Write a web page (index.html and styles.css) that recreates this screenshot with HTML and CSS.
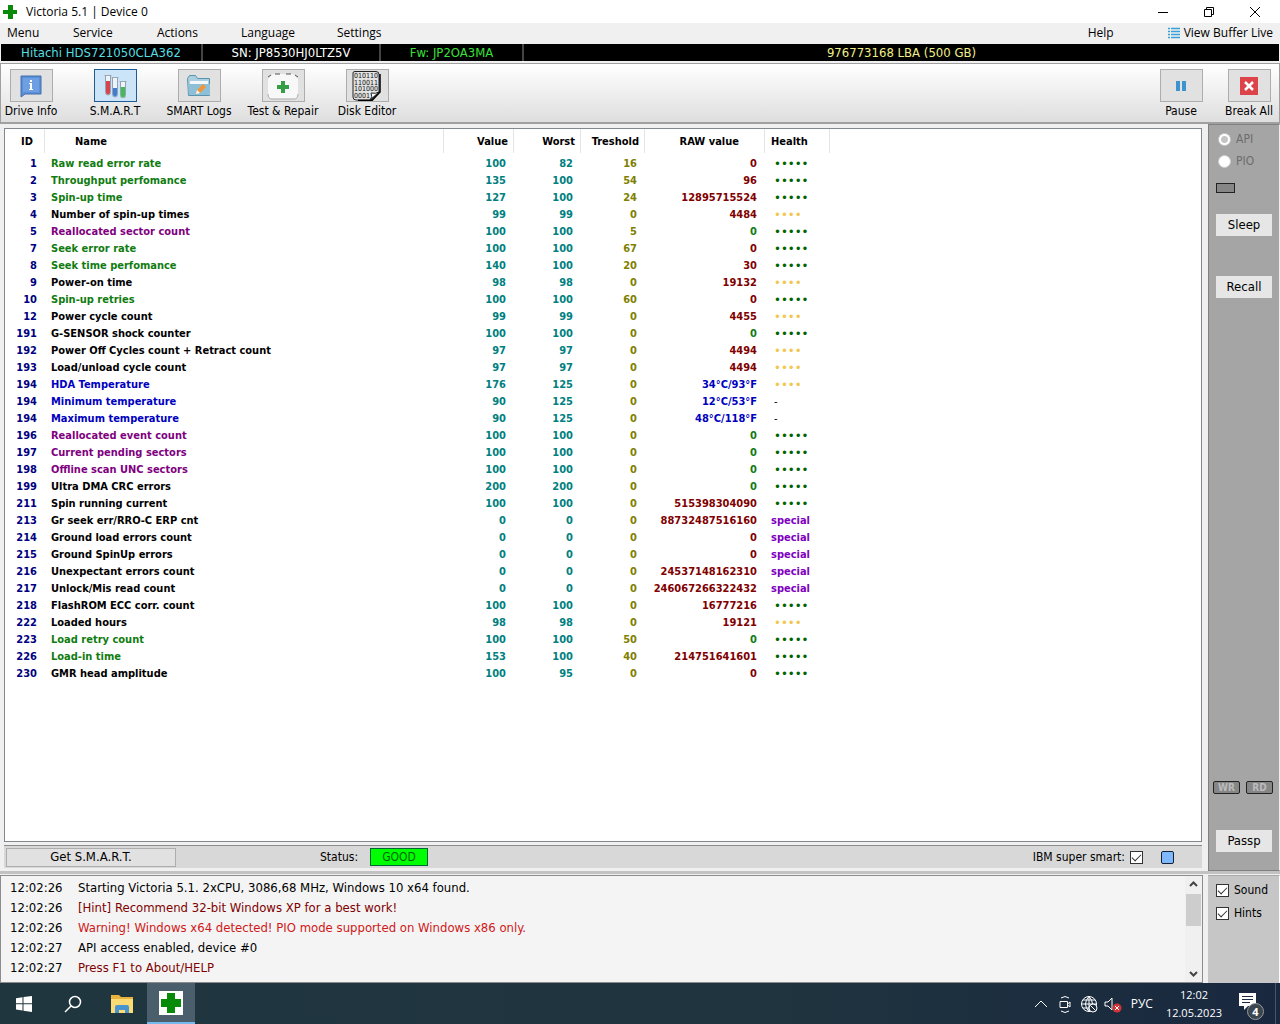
FILE: index.html
```
<!DOCTYPE html>
<html lang="en">
<head>
    <meta charset="UTF-8">
    <meta name="viewport" content="width=device-width, initial-scale=1.0">
    <title>Victoria 5.1 | Device 0</title>
    <link rel="stylesheet" href="styles.css">
</head>
<body>
    <header class="titlebar">
        <svg class="logo" viewBox="0 0 14 14"><path d="M5 0h5v5h4v4h-4v5H5V9H0V5h5z" fill="#0a8a0a"/></svg>
        <h1>Victoria 5.1 | Device 0</h1>
        <div class="window-buttons">
            <button aria-label="Minimize"><svg viewBox="0 0 12 12"><path d="M1 6.500h10"/></svg></button>
            <button aria-label="Restore"><svg viewBox="0 0 12 12"><path d="M1.500 3.500h7v7h-7zM3.500 3.500v-2h7v7h-2"/></svg></button>
            <button aria-label="Close"><svg viewBox="0 0 12 12"><path d="M1 1l10 10M11 1L1 11"/></svg></button>
        </div>
    </header>

    <nav class="menu">
        <div class="menu-items">
            <a href="#">Menu</a>
            <a href="#">Service</a>
            <a href="#">Actions</a>
            <a href="#">Language</a>
            <a href="#">Settings</a>
        </div>
        <a href="#" class="help">Help</a>
        <a href="#" class="buffer">
            <svg viewBox="0 0 12 12"><path d="M0 1.500h2M3 1.500h9M0 4.500h2M3 4.500h9M0 7.500h2M3 7.500h9M0 10.500h2M3 10.500h9" stroke="#3a9fd8" stroke-width="1.500"/></svg>
            View Buffer Live
        </a>
    </nav>

    <div class="drive">
        <span class="model">Hitachi HDS721050CLA362</span>
        <span class="serial">SN: JP8530HJ0LTZ5V</span>
        <span class="firmware">Fw: JP2OA3MA</span>
        <span class="size">976773168 LBA (500 GB)</span>
    </div>

    <div class="toolbar">
        <button class="tool">
            <span class="tool-box"><svg viewBox="0 0 24 24"><path d="M2 2h20v18H6l-4 3z" fill="#5b8fd6" stroke="#416fae"/><path d="M4 4h16v14H4z" fill="#6d9fe2"/><path d="M11 6h2v2h-2zM10 9h3v6h1v1h-4v-1h1v-5h-1z" fill="#fff"/></svg></span>
            <span>Drive Info</span>
        </button>
        <button class="tool active">
            <span class="tool-box"><svg viewBox="0 0 24 24"><g fill="#eef3f8" stroke="#93a2b2"><path d="M2.500 1.500h5v17a2.500 2.500 0 0 1-5 0zM9.500 3.500h5v17a2.500 2.500 0 0 1-5 0zM17.500 7.500h5v14a2.500 2.500 0 0 1-5 0z"/></g><path d="M3 7h4v11.500a2 2 0 0 1-4 0z" fill="#d6454b"/><path d="M10 14h4v6.500a2 2 0 0 1-4 0z" fill="#3e7fd2"/><path d="M18 13h4v8.500a2 2 0 0 1-4 0z" fill="#44bb55"/><path d="M1.500 1.500h7M8.500 3.500h7M16.500 7.500h7" stroke="#9aa8b5"/></svg></span>
            <span>S.M.A.R.T</span>
        </button>
        <button class="tool">
            <span class="tool-box"><svg viewBox="0 0 24 24"><path d="M1.500 21.500l-1-17 2-3h6l2 3h12v17z" fill="#a9cfe0" stroke="#5b93ad"/><path d="M3 7h18v3H3z" fill="#f4f8fa"/><path d="M1 10h22v11H2z" fill="#8dc0d6"/><path d="M9 20l1-4 6-6 3 3-6 6z" fill="#f0953a"/><path d="M9 20l1-4 3 3z" fill="#fff"/></svg></span>
            <span>SMART Logs</span>
        </button>
        <button class="tool">
            <span class="tool-box"><svg class="wide" viewBox="0 0 34 30"><path d="M7 3h20l5 5v17a3 3 0 0 1-3 3H5a3 3 0 0 1-3-3V8z" fill="#f8f8f8"/><path d="M2 6l3-2M9 3h5M20 3h5M29 4l3 2" stroke="#555"/><path d="M2 23q0 5 4 5h22q4 0 4-5" fill="none" stroke="#aaa"/><path d="M15 10h4v4h4v4h-4v4h-4v-4h-4v-4h4z" fill="#35a043"/></svg></span>
            <span>Test &amp; Repair</span>
        </button>
        <button class="tool">
            <span class="tool-box"><svg class="wide" viewBox="0 0 34 30"><path d="M3 2q0-1.500 2-1.500h21q3 0 3 3V21l-8 8H6q-3 0-3-3z" fill="#e4e4e4" stroke="#222"/><path d="M30 3v18l-8 8.500H8" stroke="#000" stroke-width="1.500" fill="none"/><g font-family="DejaVu Sans Condensed" font-size="7" fill="#111"><text x="4" y="7">010110</text><text x="4" y="14">110011</text><text x="4" y="20">101000</text><text x="4" y="27">0001</text></g><path d="M20 29q3-3 1-7 5 1 8-1z" fill="#fff" stroke="#222"/></svg></span>
            <span>Disk Editor</span>
        </button>
        <div class="toolbar-right">
            <button class="tool">
                <span class="tool-box"><svg viewBox="0 0 24 24"><path d="M7 7h4v10H7zM13 7h4v10h-4z" fill="#3d94cf"/></svg></span>
                <span>Pause</span>
            </button>
            <button class="tool">
                <span class="tool-box"><svg viewBox="0 0 24 24"><path d="M3 3h18v18H3z" fill="#dc4449"/><path d="M8 8l8 8M16 8l-8 8" stroke="#fff" stroke-width="2.500"/></svg></span>
                <span>Break All</span>
            </button>
        </div>
    </div>

    <main>
        <section class="smart">
            <div class="list">
                <table>
                    <colgroup>
                        <col class="c-id"><col class="c-name"><col class="c-value"><col class="c-worst"><col class="c-tresh"><col class="c-raw"><col class="c-health">
                    </colgroup>
                    <thead>
                        <tr><th>ID</th><th>Name</th><th>Value</th><th>Worst</th><th>Treshold</th><th>RAW value</th><th>Health</th></tr>
                    </thead>
                    <tbody>
                        <tr class="green"><td>1</td><td>Raw read error rate</td><td>100</td><td>82</td><td>16</td><td>0</td><td class="good">•••••</td></tr>
                        <tr class="green"><td>2</td><td>Throughput perfomance</td><td>135</td><td>100</td><td>54</td><td>96</td><td class="good">•••••</td></tr>
                        <tr class="green"><td>3</td><td>Spin-up time</td><td>127</td><td>100</td><td>24</td><td>12895715524</td><td class="good">•••••</td></tr>
                        <tr><td>4</td><td>Number of spin-up times</td><td>99</td><td>99</td><td>0</td><td>4484</td><td class="fair">••••</td></tr>
                        <tr class="purple zero"><td>5</td><td>Reallocated sector count</td><td>100</td><td>100</td><td>5</td><td>0</td><td class="good">•••••</td></tr>
                        <tr class="green"><td>7</td><td>Seek error rate</td><td>100</td><td>100</td><td>67</td><td>0</td><td class="good">•••••</td></tr>
                        <tr class="green"><td>8</td><td>Seek time perfomance</td><td>140</td><td>100</td><td>20</td><td>30</td><td class="good">•••••</td></tr>
                        <tr><td>9</td><td>Power-on time</td><td>98</td><td>98</td><td>0</td><td>19132</td><td class="fair">••••</td></tr>
                        <tr class="green"><td>10</td><td>Spin-up retries</td><td>100</td><td>100</td><td>60</td><td>0</td><td class="good">•••••</td></tr>
                        <tr><td>12</td><td>Power cycle count</td><td>99</td><td>99</td><td>0</td><td>4455</td><td class="fair">••••</td></tr>
                        <tr class="zero"><td>191</td><td>G-SENSOR shock counter</td><td>100</td><td>100</td><td>0</td><td>0</td><td class="good">•••••</td></tr>
                        <tr><td>192</td><td>Power Off Cycles count + Retract count</td><td>97</td><td>97</td><td>0</td><td>4494</td><td class="fair">••••</td></tr>
                        <tr><td>193</td><td>Load/unload cycle count</td><td>97</td><td>97</td><td>0</td><td>4494</td><td class="fair">••••</td></tr>
                        <tr class="blue"><td>194</td><td>HDA Temperature</td><td>176</td><td>125</td><td>0</td><td>34°C/93°F</td><td class="fair">••••</td></tr>
                        <tr class="blue"><td>194</td><td>Minimum temperature</td><td>90</td><td>125</td><td>0</td><td>12°C/53°F</td><td class="none">-</td></tr>
                        <tr class="blue"><td>194</td><td>Maximum temperature</td><td>90</td><td>125</td><td>0</td><td>48°C/118°F</td><td class="none">-</td></tr>
                        <tr class="purple zero"><td>196</td><td>Reallocated event count</td><td>100</td><td>100</td><td>0</td><td>0</td><td class="good">•••••</td></tr>
                        <tr class="purple zero"><td>197</td><td>Current pending sectors</td><td>100</td><td>100</td><td>0</td><td>0</td><td class="good">•••••</td></tr>
                        <tr class="purple zero"><td>198</td><td>Offline scan UNC sectors</td><td>100</td><td>100</td><td>0</td><td>0</td><td class="good">•••••</td></tr>
                        <tr class="zero"><td>199</td><td>Ultra DMA CRC errors</td><td>200</td><td>200</td><td>0</td><td>0</td><td class="good">•••••</td></tr>
                        <tr><td>211</td><td>Spin running current</td><td>100</td><td>100</td><td>0</td><td>515398304090</td><td class="good">•••••</td></tr>
                        <tr><td>213</td><td>Gr seek err/RRO-C ERP cnt</td><td>0</td><td>0</td><td>0</td><td>88732487516160</td><td class="special">special</td></tr>
                        <tr><td>214</td><td>Ground load errors count</td><td>0</td><td>0</td><td>0</td><td>0</td><td class="special">special</td></tr>
                        <tr><td>215</td><td>Ground SpinUp errors</td><td>0</td><td>0</td><td>0</td><td>0</td><td class="special">special</td></tr>
                        <tr><td>216</td><td>Unexpectant errors count</td><td>0</td><td>0</td><td>0</td><td>24537148162310</td><td class="special">special</td></tr>
                        <tr><td>217</td><td>Unlock/Mis read count</td><td>0</td><td>0</td><td>0</td><td>246067266322432</td><td class="special">special</td></tr>
                        <tr><td>218</td><td>FlashROM ECC corr. count</td><td>100</td><td>100</td><td>0</td><td>16777216</td><td class="good">•••••</td></tr>
                        <tr><td>222</td><td>Loaded hours</td><td>98</td><td>98</td><td>0</td><td>19121</td><td class="fair">••••</td></tr>
                        <tr class="green zero"><td>223</td><td>Load retry count</td><td>100</td><td>100</td><td>50</td><td>0</td><td class="good">•••••</td></tr>
                        <tr class="green"><td>226</td><td>Load-in time</td><td>153</td><td>100</td><td>40</td><td>214751641601</td><td class="good">•••••</td></tr>
                        <tr><td>230</td><td>GMR head amplitude</td><td>100</td><td>95</td><td>0</td><td>0</td><td class="good">•••••</td></tr>
                    </tbody>
                </table>
            </div>
            <div class="status">
                <button class="get">Get S.M.A.R.T.</button>
                <span class="status-label">Status:</span>
                <span class="good-box">GOOD</span>
                <label class="ibm">IBM super smart:<input type="checkbox" checked></label>
                <span class="square"></span>
            </div>
        </section>
        <aside class="side">
            <label class="mode"><input type="radio" name="mode" checked disabled>API</label>
            <label class="mode"><input type="radio" name="mode" disabled>PIO</label>
            <span class="led"></span>
            <button class="side-button">Sleep</button>
            <button class="side-button recall">Recall</button>
            <div class="leds"><span>WR</span><span>RD</span></div>
            <button class="side-button passp">Passp</button>
        </aside>
    </main>

    <div class="bottom">
        <div class="log">
            <div class="lines">
                <p><time>12:02:26</time>Starting Victoria 5.1. 2xCPU, 3086,68 MHz, Windows 10 x64 found.</p>
                <p class="hint"><time>12:02:26</time>[Hint] Recommend 32-bit Windows XP for a best work!</p>
                <p class="warning"><time>12:02:26</time>Warning! Windows x64 detected! PIO mode supported on Windows x86 only.</p>
                <p><time>12:02:27</time>API access enabled, device #0</p>
                <p class="hint"><time>12:02:27</time>Press F1 to About/HELP</p>
            </div>
            <div class="scroll">
                <svg viewBox="0 0 9 9"><path d="M1 6l3.500-3.500L8 6"/></svg>
                <div class="thumb"></div>
                <svg viewBox="0 0 9 9"><path d="M1 3l3.500 3.500L8 3"/></svg>
            </div>
        </div>
        <div class="options">
            <label><input type="checkbox" checked>Sound</label>
            <label><input type="checkbox" checked>Hints</label>
        </div>
    </div>

    <footer class="taskbar">
        <button class="task" aria-label="Start"><svg viewBox="0 0 24 24"><path d="M4 6.300l6.500-1v6H4zM11.500 5.100L20 4v7.300h-8.500zM4 12.300h6.500v6.200L4 17.600zM11.500 12.300H20V20l-8.500-1.200z" fill="#fff"/></svg></button>
        <button class="task" aria-label="Search"><svg viewBox="0 0 24 24"><circle cx="14" cy="10" r="5.500" fill="none" stroke="#fff" stroke-width="1.500"/><path d="M10 14l-6 6" stroke="#fff" stroke-width="1.500"/></svg></button>
        <button class="task" aria-label="Explorer"><svg viewBox="0 0 24 24"><path d="M1 3h8l2 2h12v16H1z" fill="#e8b33c"/><path d="M1 7h22v14H1z" fill="#fcdb75"/><path d="M5 21v-6q0-2 2-2h10q2 0 2 2v6h-4v-3H9v3z" fill="#4a94cf"/></svg></button>
        <button class="task current" aria-label="Victoria"><svg viewBox="0 0 24 24"><path d="M0 0h24v24H0z" fill="#fff"/><path d="M8 2h8v6h6v8h-6v6H8v-6H2V8h6z" fill="#078a07"/></svg></button>
        <div class="tray">
            <svg viewBox="0 0 18 18"><path d="M3 12l6-6 6 6"/></svg>
            <svg viewBox="0 0 18 18"><path d="M4 6.500h7.500v6H4zM11.500 9l2.500-2v5l-2.500-2M5 3q4-3 8 0M5 16q4 3 8 0"/></svg>
            <svg viewBox="0 0 18 18"><circle cx="9" cy="9" r="7.500"/><path d="M1.500 9h15M3 5h12M3 13h7M9 1.500v15M9 1.500q-7 7.500 0 15M9 1.500q7 7.500 0 15"/><circle cx="13" cy="13" r="4" fill="#1d2e3f"/><path d="M10.500 10.500l5 5"/></svg>
            <svg viewBox="0 0 18 18"><path d="M1 7h3l4-4v12l-4-4H1z"/><circle cx="13" cy="13" r="4.500" fill="#d13438" stroke="none"/><path d="M11 11l4 4M15 11l-4 4"/></svg>
            <span class="lang">РУС</span>
            <time class="clock">12:02<br>12.05.2023</time>
            <button class="notes" aria-label="Notifications"><svg viewBox="0 0 26 26"><path d="M1 2h17v13h-8l-4 4v-4H1z" fill="#fff" stroke="none"/><path d="M4 5.500h11M4 8.500h11M4 11.500h8" stroke="#1b2b40"/></svg><span class="badge">4</span></button>
        </div>
    </footer>
</body>
</html>
```

FILE: styles.css
```
*{
    box-sizing: border-box;
    margin: 0;
}
:root{
    --tahoma: "DejaVu Sans Condensed", "DejaVu Sans", sans-serif;
    --segoe: "Open Sans", "Noto Sans", sans-serif;
    --face: #f0f0f0;
    --line: #8c8c8c;
}
html, body{
    height: 100%;
}
body{
    display: flex;
    flex-direction: column;
    overflow: hidden;
    background-color: var(--face);
    font: 12px/16px var(--tahoma);
    color: black;
}
button{
    padding: 0;
    border: none;
    background: none;
    font: inherit;
    color: inherit;
}
a{
    color: inherit;
    text-decoration: none;
}
svg{
    display: block;
}

/* title and menu */
.titlebar{
    display: flex;
    align-items: center;
    height: 23px;
    padding: 0 2px 0 3px;
    background-color: white;
}
.logo{
    width: 14px;
    height: 14px;
}
h1{
    margin-left: 9px;
    font: 12px/16px var(--segoe);
}
.window-buttons{
    display: flex;
    margin-left: auto;
}
.window-buttons button{
    width: 46px;
    height: 20px;
    display: grid;
    place-items: center;
}
.window-buttons svg{
    width: 12px;
    height: 12px;
    fill: none;
    stroke: black;
}
.menu{
    display: flex;
    align-items: center;
    height: 21px;
    padding: 0 7px 2px;
    font: 12px/16px var(--segoe);
}
.menu-items{
    display: grid;
    grid-template-columns: 66px 84px 84px 96px auto;
}
.help{
    margin-left: auto;
}
.buffer{
    display: flex;
    align-items: center;
    gap: 4px;
    margin-left: 54px;
}
.buffer svg{
    width: 12px;
    height: 12px;
}

.drive{
    display: flex;
    height: 17px;
    margin: 0 1px;
    background-color: black;
    font-size: 13px;
    line-height: 17px;
    text-align: center;
}
.drive span{
    border-right: 2px solid #444;
}
.model{
    width: 202px;
    color: #55dfe0;
}
.serial{
    width: 178px;
    color: white;
}
.firmware{
    width: 143px;
    color: #3be03b;
}
.drive .size{
    flex: 1;
    border: none;
    color: #f0ef86;
}

/* toolbar */
.toolbar{
    display: flex;
    gap: 24px;
    height: 61px;
    margin-top: 2px;
    padding-top: 5px;
    border: 1px solid #a0a0a0;
    border-width: 1px 1px 2px;
    background: linear-gradient(white, #dedede);
}
.tool{
    display: flex;
    flex-direction: column;
    align-items: center;
    width: 60px;
    gap: 1px;
    white-space: nowrap;
}
.tool-box{
    display: grid;
    place-items: center;
    width: 43px;
    height: 33px;
    border: 1px solid #adadad;
    background-color: #e1e1e1;
}
.tool-box svg{
    width: 24px;
    height: 24px;
}
.tool-box .wide{
    width: 34px;
    height: 30px;
}
.active .tool-box{
    border-color: #1f5c94;
    background-color: #cce4f7;
}
.toolbar-right{
    display: flex;
    gap: 8px;
    margin-left: auto;
}

/* smart table */
main{
    flex: 1;
    min-height: 0;
    display: flex;
    gap: 5px;
}
.smart{
    flex: 1;
    display: flex;
    flex-direction: column;
    padding: 4px 1px 3px 4px;
}
.list{
    flex: 1;
    border: 1px solid #828790;
    background-color: white;
}
table{
    table-layout: fixed;
    width: 825px;
    border-collapse: collapse;
    font-size: 11px;
    font-weight: bold;
}
.c-id{ width: 40px; }
.c-name{ width: 399px; }
.c-value{ width: 70px; }
.c-worst{ width: 67px; }
.c-tresh{ width: 64px; }
.c-raw{ width: 120px; }
.c-health{ width: 65px; }
th{
    height: 26px;
    padding: 0 6px;
    background: linear-gradient(#e4e4e4, #e4e4e4) no-repeat right top / 1px 24px;
    text-align: right;
}
th:nth-child(1){
    padding-right: 12px;
}
th:nth-child(2){
    padding-left: 30px;
    text-align: left;
}
th:nth-child(6){
    padding-right: 26px;
}
th:nth-child(7){
    padding-left: 6px;
    text-align: left;
}
td{
    height: 17px;
    padding: 0 8px;
    line-height: 17px;
    text-align: right;
    white-space: nowrap;
}
td:nth-child(1){ color: #000080; }
td:nth-child(2){
    padding-left: 6px;
    text-align: left;
}
td:nth-child(3), td:nth-child(4){ color: #008080; }
td:nth-child(5){ color: #808000; }
td:nth-child(6){ color: #800000; }
td:nth-child(7){
    padding-left: 6px;
    text-align: left;
}
.green td:nth-child(2), .zero td:nth-child(6){ color: #107c10; }
.purple td:nth-child(2){ color: #800080; }
.blue td:nth-child(2), .blue td:nth-child(6){ color: #0000c0; }
td.good, td.fair, td.none{
    padding-left: 9px;
    font-weight: normal;
}
td.good, td.fair{
    font-size: 13px;
}
.good{ color: #006400; }
.fair{ color: #f0c850; }
.special{ color: #8000c0; }

.status{
    display: flex;
    align-items: center;
    height: 23px;
    margin-top: 3px;
    border-top: 1px solid var(--line);
    background-color: #d8d8d8;
}
.get{
    width: 170px;
    height: 19px;
    margin-left: 2px;
    border: 1px solid #adadad;
    background-color: #e1e1e1;
    font-size: 13px;
}
.status-label{
    margin-left: 144px;
}
.good-box{
    width: 58px;
    margin-left: 12px;
    border: 1px solid #063;
    background-color: #00ff00;
    color: #006400;
    text-align: center;
}
.ibm{
    display: flex;
    align-items: center;
    gap: 5px;
    margin-left: auto;
}
.square{
    width: 13px;
    height: 13px;
    margin: 0 28px 0 18px;
    border: 1px solid #123;
    border-radius: 2px;
    background-color: #80b8ff;
}
input[type=checkbox]{
    appearance: none;
    width: 13px;
    height: 13px;
    border: 1px solid #333;
    background-color: white;
    display: grid;
    place-items: center;
}
input[type=checkbox]:checked::before{
    content: "";
    width: 8px;
    height: 4px;
    border: solid #333;
    border-width: 0 0 1px 1px;
    transform: translateY(-1px) rotate(-45deg);
}

/* right panel */
.side{
    display: flex;
    flex-direction: column;
    align-items: flex-start;
    width: 72px;
    padding: 3px 7px 18px;
    border: 1px solid #808080;
    border-right-color: #eee;
    background-color: #a5a5a5;
}
.mode{
    display: flex;
    align-items: center;
    gap: 5px;
    height: 22px;
    color: #6d6d6d;
}
input[type=radio]{
    appearance: none;
    width: 13px;
    height: 13px;
    margin-left: 2px;
    border: 1px solid #ccc;
    border-radius: 50%;
    background-color: white;
}
input[type=radio]:checked{
    background: radial-gradient(#c4c4c4 0 3px, white 4px);
}
.led{
    width: 19px;
    height: 10px;
    margin-top: 11px;
    border: 1px solid #222;
    background-color: #868686;
}
.side-button{
    width: 56px;
    height: 22px;
    margin-top: 21px;
    background-color: #e6e6e6;
    font-size: 13px;
}
.recall{
    margin-top: 40px;
}
.leds{
    display: flex;
    gap: 6px;
    margin: auto -3px 0;
}
.leds span{
    width: 27px;
    height: 13px;
    border: 1px solid #222;
    border-radius: 2px;
    background-color: #868686;
    color: #bbb;
    font: bold 10px/11px var(--tahoma);
    text-align: center;
}
.passp{
    margin-top: 36px;
}

/* log */
.bottom{
    display: flex;
    gap: 5px;
    height: 112px;
    padding-top: 1px;
    border-top: 3px solid #c2c2c2;
}
.log{
    flex: 1;
    display: flex;
    border: 1px solid var(--line);
    background-color: #f4f4f4;
}
.lines{
    flex: 1;
    padding: 2px 9px;
    font-size: 13px;
    line-height: 20px;
}
.lines time{
    display: inline-block;
    width: 68px;
    color: black;
}
.hint{ color: #800000; }
.warning{ color: #d01818; }
.scroll{
    display: flex;
    flex-direction: column;
    align-items: center;
    width: 17px;
    padding: 4px 0;
    background-color: #f0f0f0;
}
.scroll svg{
    width: 9px;
    height: 9px;
    fill: none;
    stroke: #444;
    stroke-width: 2;
}
.thumb{
    width: 15px;
    height: 32px;
    margin: 5px 0 auto;
    background-color: #cdcdcd;
}
.options{
    display: flex;
    flex-direction: column;
    gap: 7px;
    width: 72px;
    padding: 6px 8px;
    border-top: 1px solid #aaa;
    border-right: 1px solid white;
    background-color: #c6c6c6;
}
.options label{
    display: flex;
    align-items: center;
    gap: 5px;
}

/* taskbar */
.taskbar{
    display: flex;
    gap: 1px;
    height: 41px;
    background: linear-gradient(90deg, #20363f, #1f343f 60%, #19283f);
    color: white;
    font: 12px/16px var(--segoe);
}
.task{
    display: grid;
    place-items: center;
    width: 48px;
}
.task svg{
    width: 24px;
    height: 24px;
}
.current{
    border-bottom: 2px solid #76b9ed;
    background-color: #4a5f6b;
}
.tray{
    display: flex;
    align-items: center;
    margin-left: auto;
    margin-right: 4px;
    padding-right: 11px;
    border-right: 1px solid #4a5666;
}
.tray > svg{
    width: 18px;
    height: 18px;
    margin: 0 3px;
    fill: none;
    stroke: white;
}
.lang{
    margin-left: 6px;
}
.clock{
    margin: 0 16px 0 13px;
    font-size: 11px;
    line-height: 18px;
    text-align: center;
}
.notes{
    position: relative;
}
.notes svg{
    width: 26px;
    height: 26px;
}
.badge{
    position: absolute;
    right: 0;
    bottom: -3px;
    width: 17px;
    height: 17px;
    border: 1px solid #999;
    border-radius: 50%;
    background-color: #3a4550;
    font: bold 11px/15px var(--segoe);
    text-align: center;
}
```
